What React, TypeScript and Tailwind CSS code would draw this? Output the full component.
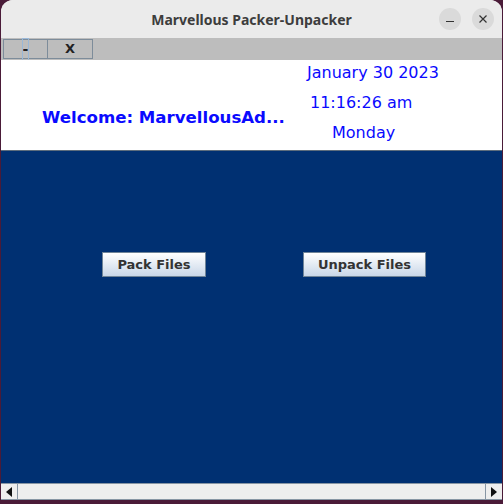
import React from 'react';

const dejavu = { fontFamily: '"DejaVu Sans", sans-serif' };

function TitleBar() {
  return (
    <div className="grid h-[38px] grid-cols-[1fr_auto_1fr] items-center bg-[#ebebeb]">
      <div />
      <div className="font-['Noto_Sans',sans-serif] text-[14px] font-bold text-[#3d3d3d]">
        Marvellous Packer-Unpacker
      </div>
      <div className="flex justify-end gap-[11px] pr-[8px]">
        <button className="flex h-[22px] w-[22px] items-center justify-center rounded-full bg-[#dadada]">
          <span className="mt-[5px] block h-[1px] w-[8px] bg-[#333]" />
        </button>
        <button className="flex h-[22px] w-[22px] items-center justify-center rounded-full bg-[#dadada]">
          <svg width="10" height="10" viewBox="0 0 10 10">
            <path d="M1.5 1.5 L8.5 8.5 M8.5 1.5 L1.5 8.5" stroke="#333" strokeWidth="1.2" />
          </svg>
        </button>
      </div>
    </div>
  );
}

function MenuBar() {
  return (
    <div className="flex h-[22px] items-start bg-[#bdbdbd] pl-[2px] pt-px">
      <button
        className="flex h-[20px] w-[45px] items-center justify-center border border-[#7d8c9a] text-[14px] font-bold text-[#222]"
        style={dejavu}
      >
        <span className="outline outline-1 outline-[#9ab8d8]">-</span>
      </button>
      <button
        className="flex h-[20px] w-[45px] items-center justify-center border border-l-0 border-[#7d8c9a] text-[13px] font-bold text-[#222]"
        style={dejavu}
      >
        X
      </button>
    </div>
  );
}

function Header() {
  return (
    <div className="flex h-[91px] border-b border-[#5d6d7d] bg-white text-[#0a0aff]" style={dejavu}>
      <div className="flex w-[301px] items-end pb-[19px] pl-[41px] text-[16.6px] font-bold">
        Welcome: MarvellousAd...
      </div>
      <div className="-mt-[2px] flex flex-col text-[16px] leading-[30px]">
        <span className="pl-[5px]">January 30 2023</span>
        <span className="pl-[8px]">11:16:26 am</span>
        <span className="pl-[30px]">Monday</span>
      </div>
    </div>
  );
}

function ActionButton({ label, width }: { label: string; width: string }) {
  return (
    <button
      className={`${width} h-[25px] border border-[#6f8498] bg-gradient-to-b from-white to-[#c9d7e8] text-[13px] font-bold text-[#333]`}
      style={dejavu}
    >
      {label}
    </button>
  );
}

function ScrollBar() {
  return (
    <div className="flex h-[16px] border-t border-[#8896a4] bg-[#eeeeee]">
      <div className="flex w-[17px] items-center justify-center border-r border-[#8896a4]">
        <svg width="6" height="10" viewBox="0 0 6 10">
          <path d="M6 0 L0 5 L6 10 Z" fill="#111" />
        </svg>
      </div>
      <div className="flex-1" />
      <div className="flex w-[17px] items-center justify-center border-l border-[#8896a4]">
        <svg width="6" height="10" viewBox="0 0 6 10">
          <path d="M0 0 L6 5 L0 10 Z" fill="#111" />
        </svg>
      </div>
    </div>
  );
}

export default function App() {
  return (
    <div className="h-[504px] w-[503px] bg-[#4a1b38] px-px pb-[4px]">
      <div className="flex h-full flex-col overflow-hidden rounded-t-[12px] bg-[#ebebeb]">
        <TitleBar />
        <MenuBar />
        <Header />
        <div className="flex-1 bg-[#003072] pl-[101px] pt-[101px]">
          <div className="flex gap-[97px]">
            <ActionButton label="Pack Files" width="w-[104px]" />
            <ActionButton label="Unpack Files" width="w-[123px]" />
          </div>
        </div>
        <div className="border-b border-[#8896a4]">
          <ScrollBar />
        </div>
      </div>
    </div>
  );
}
